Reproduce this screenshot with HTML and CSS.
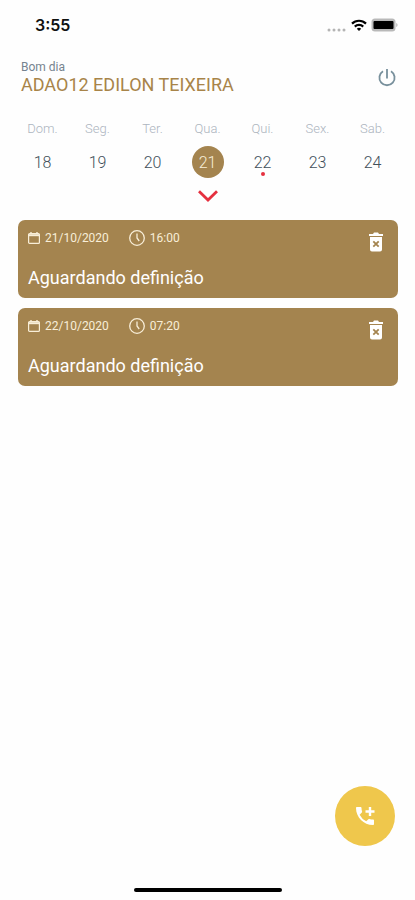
FILE: index.html
```
<!DOCTYPE html>
<html lang="pt-BR">
<head>
    <meta charset="UTF-8">
    <meta name="viewport" content="width=device-width, initial-scale=1.0">
    <title>Agenda</title>
    <link rel="stylesheet" href="styles.css">
</head>
<body>
    <div class="status-bar">
        <span class="status-time">3:55</span>
        <div class="status-icons">
            <svg width="20" height="4" viewBox="0 0 20 4" fill="#b4b4b4">
                <circle cx="2" cy="2" r="1.5"/>
                <circle cx="7" cy="2" r="1.5"/>
                <circle cx="12" cy="2" r="1.5"/>
                <circle cx="17" cy="2" r="1.5"/>
            </svg>
            <svg class="wifi" width="16" height="12" viewBox="0 0 16 12" fill="none" stroke="#000" stroke-width="2.2">
                <path d="M1 4.6a10 10 0 0 1 14 0"/>
                <path d="M3.8 7.6a6 6 0 0 1 8.4 0"/>
                <path d="M8 12 5.8 9.8a3.2 3.2 0 0 1 4.4 0z" fill="#000" stroke="none"/>
            </svg>
            <svg width="27" height="14" viewBox="0 0 27 14">
                <rect x="0.5" y="0.5" width="24" height="13" rx="3.5" fill="#b9b9b9"/>
                <rect x="2.5" y="3" width="20" height="8" rx="1" fill="#000"/>
                <path d="M25.3 5v4c1.6-.6 1.6-3.4 0-4z" fill="#b0b0b0"/>
            </svg>
        </div>
    </div>

    <header class="header">
        <div>
            <p class="greeting">Bom dia</p>
            <h1 class="user-name">ADAO12 EDILON TEIXEIRA</h1>
        </div>
        <button class="icon-button logout" aria-label="Sair">
            <svg width="18" height="18" viewBox="0 0 18 18" fill="none" stroke="#78909c" stroke-width="1.8">
                <path d="M9 0v9.500"/>
                <path d="M5 2.200a7.600 7.600 0 1 0 8 0"/>
            </svg>
        </button>
    </header>

    <main>
        <div class="week">
            <div class="day"><span class="day-name">Dom.</span><button class="day-number">18</button></div>
            <div class="day"><span class="day-name">Seg.</span><button class="day-number">19</button></div>
            <div class="day"><span class="day-name">Ter.</span><button class="day-number">20</button></div>
            <div class="day"><span class="day-name">Qua.</span><button class="day-number selected">21</button></div>
            <div class="day"><span class="day-name">Qui.</span><button class="day-number marked">22</button></div>
            <div class="day"><span class="day-name">Sex.</span><button class="day-number">23</button></div>
            <div class="day"><span class="day-name">Sab.</span><button class="day-number">24</button></div>
        </div>
        <button class="icon-button expand" aria-label="Abrir calendário">
            <svg width="20" height="12" viewBox="0 0 20 12" fill="none" stroke="#e5303f" stroke-width="2.8">
                <path d="M1 1.2 10 10 19 1.2"/>
            </svg>
        </button>

        <div class="card-list">
            <article class="card">
                <div class="card-top">
                    <div class="card-info">
                        <svg width="12" height="12" viewBox="0 0 12 12" fill="none" stroke="#f8eed8">
                            <rect x="0.6" y="1.6" width="10.8" height="9.8" rx="1" stroke-width="1.2"/>
                            <path d="M.6 3.2h10.8" stroke-width="2"/>
                            <path d="M3 0v2M9 0v2" stroke-width="1.4"/>
                        </svg>
                        <span class="card-date">21/10/2020</span>
                        <svg class="clock-icon" width="16" height="16" viewBox="0 0 16 16" fill="none" stroke="#f8eed8" stroke-width="1.3">
                            <circle cx="8" cy="8" r="7.3"/>
                            <path d="M8 3.6V8l2.2 3"/>
                        </svg>
                        <span class="card-time">16:00</span>
                    </div>
                    <button class="icon-button" aria-label="Excluir">
                        <svg width="16" height="20" viewBox="0 0 16 20">
                            <path d="M1 2h4l1-1.4h4L11 2h4v2H1zM2 5h12v12.5a2 2 0 0 1-2 2H4a2 2 0 0 1-2-2z" fill="#fff"/>
                            <path d="M5.3 9.3l5.4 5.4M10.7 9.3l-5.400 5.400" stroke="#a4844f" stroke-width="1.8"/>
                        </svg>
                    </button>
                </div>
                <h2 class="card-title">Aguardando definição</h2>
            </article>
            <article class="card">
                <div class="card-top">
                    <div class="card-info">
                        <svg width="12" height="12" viewBox="0 0 12 12" fill="none" stroke="#f8eed8">
                            <rect x="0.6" y="1.6" width="10.8" height="9.8" rx="1" stroke-width="1.2"/>
                            <path d="M.6 3.2h10.8" stroke-width="2"/>
                            <path d="M3 0v2M9 0v2" stroke-width="1.4"/>
                        </svg>
                        <span class="card-date">22/10/2020</span>
                        <svg class="clock-icon" width="16" height="16" viewBox="0 0 16 16" fill="none" stroke="#f8eed8" stroke-width="1.3">
                            <circle cx="8" cy="8" r="7.3"/>
                            <path d="M8 3.6V8l2.2 3"/>
                        </svg>
                        <span class="card-time">07:20</span>
                    </div>
                    <button class="icon-button" aria-label="Excluir">
                        <svg width="16" height="20" viewBox="0 0 16 20">
                            <path d="M1 2h4l1-1.4h4L11 2h4v2H1zM2 5h12v12.5a2 2 0 0 1-2 2H4a2 2 0 0 1-2-2z" fill="#fff"/>
                            <path d="M5.3 9.3l5.4 5.4M10.7 9.3l-5.4 5.4" stroke="#a4844f" stroke-width="1.8"/>
                        </svg>
                    </button>
                </div>
                <h2 class="card-title">Aguardando definição</h2>
            </article>
        </div>
    </main>

    <button class="fab" aria-label="Nova ligação">
        <svg width="24" height="24" viewBox="0 0 24 24" fill="#fff">
            <path d="M20 15.5c-1.25 0-2.45-.2-3.57-.57a1 1 0 0 0-1.02.24l-2.2 2.2a15.05 15.05 0 0 1-6.59-6.58l2.2-2.21c.28-.27.36-.66.25-1.01A11.36 11.36 0 0 1 8.500 4c0-.55-.45-1-1-1H4c-.55 0-1 .45-1 1 0 9.39 7.61 17 17 17 .55 0 1-.45 1-1v-3.5c0-.55-.45-1-1-1z"/>
            <path d="M15.8 3h2.4v3.3h3.3v2.4h-3.3V12h-2.4V8.7h-3.3V6.3h3.3z"/>
        </svg>
    </button>

    <div class="home-indicator"></div>
</body>
</html>
```
FILE: styles.css
```
* {
    box-sizing: border-box;
}

body {
    margin: 0;
    min-height: 100vh;
    display: flex;
    flex-direction: column;
    background: #fefefe;
    font-family: Roboto, sans-serif;
}

p, h1, h2 {
    margin: 0;
    font-weight: 400;
}

svg {
    display: block;
}

button {
    font-family: inherit;
    border: none;
    padding: 0;
    background: none;
    cursor: pointer;
}

.status-bar {
    display: flex;
    justify-content: space-between;
    align-items: center;
    height: 50px;
    padding: 0 17px 0 35px;
}

.status-time {
    font-family: Inter, sans-serif;
    font-size: 16px;
    font-weight: 600;
    color: #111111;
}

.status-icons {
    display: flex;
    align-items: flex-end;
    gap: 4px;
}

.wifi {
    margin-bottom: 1px;
}

.header {
    display: flex;
    justify-content: space-between;
    align-items: center;
    padding: 10px 19px 0 21px;
}

.greeting {
    font-size: 12px;
    line-height: 14px;
    color: #75838f;
}

.user-name {
    font-size: 18px;
    line-height: 22px;
    color: #a88449;
}

.week {
    display: grid;
    grid-template-columns: repeat(7, 1fr);
    padding: 24px 15px 0;
}

.day {
    display: flex;
    flex-direction: column;
    align-items: center;
    gap: 8px;
}

.day-name {
    font-size: 13px;
    line-height: 18px;
    font-weight: 300;
    color: #adb5bf;
}

.day-number {
    position: relative;
    width: 32px;
    height: 32px;
    border-radius: 50%;
    font-size: 16px;
    font-weight: 300;
    color: #42505a;
}

.day-number.selected {
    background: #a4844f;
    color: #f8eed8;
}

.day-number.marked::after {
    content: "";
    position: absolute;
    left: 14px;
    bottom: 2px;
    width: 4px;
    height: 4px;
    border-radius: 50%;
    background: #e5303f;
}

.expand {
    display: block;
    margin: 12px auto 0;
}

.card-list {
    display: flex;
    flex-direction: column;
    gap: 10px;
    padding: 18px 17px 18px 18px;
}

.card {
    padding: 8px 14px 8px 10px;
    border-radius: 7px;
    background: #a4844f;
    color: #ffffff;
}

.card-top {
    display: flex;
    justify-content: space-between;
    align-items: center;
    height: 28px;
}

.card-info {
    display: flex;
    align-items: center;
    align-self: flex-start;
    height: 20px;
}

.card-date,
.card-time {
    margin-left: 5px;
    font-size: 12px;
    color: #f8eed8;
}

.clock-icon {
    margin-left: 20px;
}

.card-title {
    margin-top: 10px;
    font-size: 18px;
    line-height: 24px;
}

.fab {
    position: fixed;
    right: 20px;
    bottom: 54px;
    display: flex;
    justify-content: center;
    align-items: center;
    width: 60px;
    height: 60px;
    border-radius: 50%;
    background: #efc74c;
}

.home-indicator {
    width: 148px;
    height: 4px;
    margin: auto auto 8px;
    border-radius: 2px;
    background: #000000;
}
```
